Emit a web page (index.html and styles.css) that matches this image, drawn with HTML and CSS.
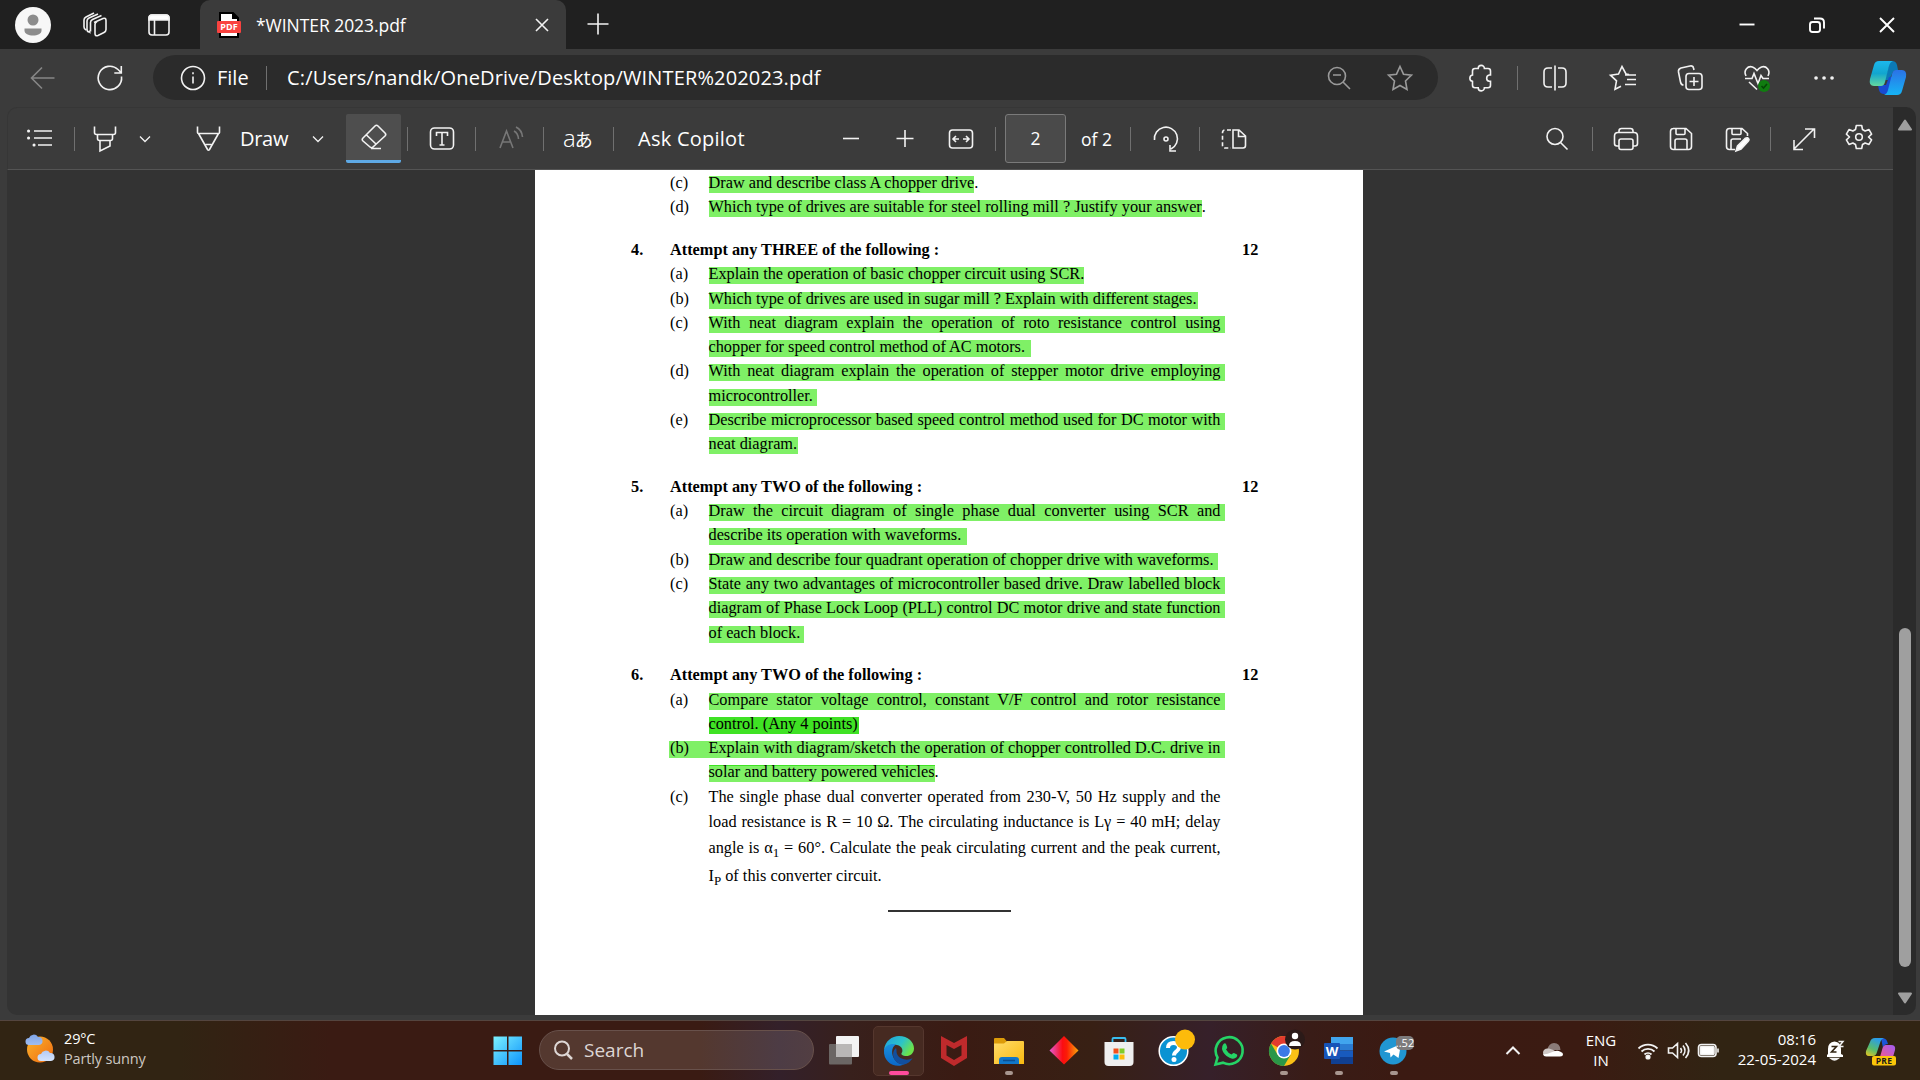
FILE: index.html
```html
<!DOCTYPE html>
<html lang="en">
<head>
<meta charset="utf-8">
<title>WINTER 2023.pdf</title>
<link rel="stylesheet" href="styles.css">
</head>
<body>
<div class="desktop">
  <header class="titlebar">
    <svg class="avatar" viewBox="0 0 36 36"><circle cx="18" cy="18" r="18" fill="#f7f7f7"/><circle cx="18" cy="13" r="5.5" fill="#8c8c8c"/><path d="M9.500 21.500h17v2c0 3.500-4 5-8.500 5s-8.500-1.500-8.500-5z" fill="#8c8c8c"/></svg>
    <svg class="icon workspaces" viewBox="0 0 28 28"><path d="M13 11.500l9-4q3-1 3 2v9q0 2-2 3l-6 3q-3 1-3-2v-9q0-2 2-3M9.500 20.500v-9q0-2 2-3l9-4M9.500 21.500q-1 .5-1-2M5 19q-2-1-2-3V9q0-2 2-3l8-4M8 21q-2 0-2-3v-8q0-2 2-3l9-4"/></svg>
    <svg class="icon tab-actions" viewBox="0 0 28 28"><rect x="4" y="4" width="20" height="20" rx="3"/><path d="M4 9V7q0-3 3-3h14q3 0 3 3v2z" fill="#fff"/><path d="M9.500 9v15"/></svg>
    <div class="tab">
      <svg class="icon" viewBox="0 0 28 28"><path d="M5 2h13l5 5v19H5z" fill="#fff" stroke="#000" stroke-width="2"/><path d="M17 1l7 7h-7z" fill="#000" stroke="none"/><rect x="2" y="10" width="24" height="12" rx="1" fill="#f9423f" stroke="none"/><text class="pdf-label" x="14" y="19.200">PDF</text></svg>
      <span class="tab-title">*WINTER 2023.pdf</span>
      <svg class="icon tab-close" viewBox="0 0 28 28"><path d="M8 8l12 12M20 8L8 20"/></svg>
    </div>
    <svg class="icon new-tab" viewBox="0 0 28 28"><path d="M14 2.500v21M3.500 13h21"/></svg>
    <div class="window-controls">
      <svg class="icon bold" viewBox="0 0 28 28"><path d="M6.500 13.500h15"/></svg>
      <svg class="icon bold" viewBox="0 0 28 28"><rect x="7" y="11" width="10" height="10" rx="2.500"/><path d="M11 7.500h6q4 0 4 4v6"/></svg>
      <svg class="icon bold" viewBox="0 0 28 28"><path d="M7 7l14 14M21 7L7 21"/></svg>
    </div>
  </header>

  <nav class="addressbar">
    <svg class="icon back" viewBox="0 0 28 28"><path d="M25.500 14H3M13 3.500L2.500 14 13 24.500"/></svg>
    <svg class="icon refresh" viewBox="0 0 28 28"><path d="M25.500 12.500A11.700 11.700 0 1 1 22 5.500l3 3M25.300 2v7h-7"/></svg>
    <div class="omnibox">
      <svg class="icon" viewBox="0 0 28 28"><circle cx="14" cy="14" r="11.500"/><path d="M14 12.500v7M14 8.200v2"/></svg>
      <span class="scheme">File</span>
      <i class="divider"></i>
      <span class="url">C:/Users/nandk/OneDrive/Desktop/WINTER%202023.pdf</span>
      <svg class="icon dim zoom-state" viewBox="0 0 28 28"><circle cx="12" cy="12" r="8.500"/><path d="M18 18l7 7M8 11h8"/></svg>
      <svg class="icon dim star" viewBox="0 0 28 28"><path d="M14 2.500l3.500 7.700 8 1-6 5.800 1.500 8.500-7-4-7 4L8.500 17l-6-5.800 8-1z"/></svg>
    </div>
    <svg class="icon extensions" viewBox="0 0 28 28"><path d="M8 4.500h3.200a3.100 3.100 0 0 1 6.200 0H21q2.500 0 2.500 2.500v4h-1.200a3.200 3.200 0 0 0 0 6.300h1.200v4q0 2.500-2.500 2.500h-3.600a3.100 3.100 0 0 1-6.200 0H8q-2.500 0-2.500-2.500v-4a3.200 3.200 0 0 1 0-6.300V7q0-2.500 2.500-2.500z"/></svg>
    <i class="divider"></i>
    <svg class="icon split" viewBox="0 0 28 28"><path d="M14 1.500v25M11 4H7Q3 4 3 8v11q0 4 4 4h4M17 4h4q4 0 4 4v11q0 4-4 4h-4"/></svg>
    <svg class="icon favorites" viewBox="0 0 28 28"><path d="M20 10.500l-3-.5-4-7.500-3.500 7.500-8 1.200 6 5.600-1.500 8.400 6-3M16 11h11M18 15.500h9M16 20.500h11"/></svg>
    <svg class="icon collections" viewBox="0 0 28 28"><rect x="10" y="9.500" width="16" height="16" rx="3"/><path d="M18 13v9M13.500 17.500h9M7.500 21Q5 21 4.500 18L2.500 8Q2 5 5 4l9-2q3-.5 3.500 2l.5 2"/></svg>
    <svg class="icon heart" viewBox="0 0 28 28"><path d="M3 12C0 6 5 1.500 9.500 3Q12 4 14 6.500 16 4 18.500 3C23 1.500 28 6 25 12M2 14.500h7l2-5 4 10 3-8 2 3h6M6 18l8 7.500"/><circle cx="21" cy="22" r="6" fill="#107c10" stroke="none"/><path d="M18.500 22l2 2 3.500-4" stroke="#064706"/></svg>
    <svg class="icon more" viewBox="0 0 28 28"><path d="M6 14h.1M14 14h.1M22 14h.1" stroke-width="3.600" stroke-linecap="round"/></svg>
    <svg class="copilot" viewBox="0 0 40 36">
      <defs>
        <linearGradient id="cpA" x1="0" y1="0" x2="0" y2="1"><stop offset="0" stop-color="#1cb8ed"/><stop offset=".5" stop-color="#12a6cf"/><stop offset="1" stop-color="#63d8a0"/></linearGradient>
        <linearGradient id="cpB" x1="0" y1="0" x2="0" y2="1"><stop offset="0" stop-color="#2b72e6"/><stop offset="1" stop-color="#16b4f5"/></linearGradient>
      </defs>
      <path d="M22 1h2q4 0 5 4l1 5q-5 0-6 4l-3 6h-4z" fill="#0b79b5"/>
      <path d="M10 25h8l3-8h4l-5 17h-4q-4 0-5-4z" fill="#184bd2"/>
      <path d="M11 1h14q-3 1-4 5l-4 16q-1 4-4 4H6Q.5 26 2 19L6 5q1-4 5-4z" fill="url(#cpA)"/>
      <path d="M28 10h6q5 0 4 7l-4 14q-1 4-5 4H16q3-1 4-5l4-16q1-4 4-4z" fill="url(#cpB)"/>
    </svg>
  </nav>

  <div class="viewer">
    <main class="viewer-main">
      <div class="pdf-toolbar">
        <svg class="icon contents" viewBox="0 0 28 28"><path d="M8 6h18M8 13h18M12 20h14"/><path d="M2.500 6h.1M2.500 13h.1M8 20h.1" stroke-width="3" stroke-linecap="round"/></svg>
        <i class="divider d1"></i>
        <svg class="icon highlighter" viewBox="0 0 28 28"><path d="M3.500 1.500v6q0 2 2 2h17q2 0 2-2v-6M6.500 9.500v4q0 2 2 2h11q2 0 2-2v-4M9 15.500V26l10-5v-5.500"/></svg>
        <svg class="icon thin chev1" viewBox="0 0 28 28"><path d="M9 11.500l5 5 5-5"/></svg>
        <svg class="icon pen" viewBox="0 0 28 28"><path d="M2.500 1.500v6q0 1 1 1h20q1 0 1-1v-6M3.500 8.500l9 16q1 1.500 2 0l9-16M10.500 19.500h6"/></svg>
        <span class="label draw">Draw</span>
        <svg class="icon thin chev2" viewBox="0 0 28 28"><path d="M9 11.500l5 5 5-5"/></svg>
        <span class="eraser"><svg class="icon" viewBox="0 0 28 28"><path d="M3 14L15 2q1.500-1.500 3 0l7 7q1.500 1.500 0 3L13 23q-1.500 1.500-3 0l-7-6q-1.500-1.500 0-3zM6.500 11l10 9.500M11 24.500h10"/></svg></span>
        <i class="divider d2"></i>
        <svg class="icon textbox" viewBox="0 0 28 28"><rect x="2.500" y="3" width="23" height="21" rx="4"/><path d="M8.500 11V7.500h11V11M14 7.500V20M11.500 20h5"/></svg>
        <i class="divider d3"></i>
        <svg class="icon faint aloud" viewBox="0 0 28 28"><path d="M3 23L9.500 6 16 23M5.500 17h8.500M17 6q4 2 4.500 8M19 2q6 3 6.500 10"/></svg>
        <i class="divider d4"></i>
        <span class="translate">a<b>あ</b></span>
        <i class="divider d5"></i>
        <span class="label ask">Ask Copilot</span>
        <svg class="icon zoom-out" viewBox="0 0 28 28"><path d="M6 13.500h16"/></svg>
        <svg class="icon zoom-in" viewBox="0 0 28 28"><path d="M5.500 13.500h17M14 5v17"/></svg>
        <svg class="icon fit" viewBox="0 0 28 28"><rect x="2.500" y="5" width="23" height="18" rx="3"/><path d="M12 14H6.500M9 11l-3 3 3 3M16 14h5.500M19 11l3 3-3 3"/></svg>
        <i class="divider d6"></i>
        <span class="page-box">2</span>
        <span class="page-count">of 2</span>
        <i class="divider d7"></i>
        <svg class="icon rotate" viewBox="0 0 28 28"><circle cx="14" cy="14" r="2"/><path d="M2.500 15A11.500 11.500 0 1 1 19 24M24 26h-6v-6"/></svg>
        <i class="divider d8"></i>
        <svg class="icon pages" viewBox="0 0 28 28"><path d="M13 5h6l6.500 6v9.500q0 2.500-2.500 2.500H13zM18.500 5v6.500H25"/><path d="M11 5H5Q2.500 5 2.500 8v12Q2.500 23 5 23h6" stroke-dasharray="4 2.500"/></svg>
        <svg class="icon find" viewBox="0 0 28 28"><circle cx="12" cy="11.500" r="8"/><path d="M17.500 17.500l7 7"/></svg>
        <i class="divider d9"></i>
        <svg class="icon print" viewBox="0 0 28 28"><path d="M7 21H5q-2.500 0-2.500-2.500V11Q2.500 7.500 6 7.500h16q3.500 0 3.500 3.500v7.500Q25.500 21 23 21h-2M7 7.500V6q0-2.500 2.500-2.500h9Q21 3.500 21 6v1.500"/><rect x="7" y="14" width="14" height="10.500" rx="2"/></svg>
        <svg class="icon save" viewBox="0 0 28 28"><path d="M6 3.500h13l5.500 5v13q0 3-3 3H6.500q-3 0-3-3v-15q0-3 3-3zM9 3.500v5q0 1 1 1h7q1 0 1-1v-5M8 24.500V16q0-2 2-2h8q2 0 2 2v8.500"/></svg>
        <svg class="icon save-as" viewBox="0 0 28 28"><path d="M12 24.500H6.500q-3 0-3-3v-15q0-3 3-3H19l5.500 5V11M9 3.500v5q0 1 1 1h7q1 0 1-1v-5M8 24.500V16q0-2 2-2h8"/><path d="M13 26l1.500-5L22 13.500q3-2 4 1-.2 1-1 2L18 24z" fill="#fff"/></svg>
        <i class="divider d10"></i>
        <svg class="icon expand" viewBox="0 0 28 28"><path d="M4 24L24 4M15 4h9.500v9M4 15v9.500h9"/></svg>
        <svg class="icon gear" viewBox="0 0 28 28"><circle cx="14" cy="14" r="3.300"/><path d="M11.300 2.500h5.400l.8 4 2.600 1.500 3.900-1.400 2.600 4.600-3.100 2.800 3.100 2.800-2.600 4.600-3.900-1.400-2.600 1.500-.8 4h-5.400l-.8-4-2.600-1.500L4 21.400l-2.600-4.600L4.500 14l-3.100-2.800L4 6.600 7.900 8l2.600-1.500z" stroke-linejoin="round"/></svg>
      </div>

      <div class="canvas">
        <article class="paper">
          <section class="question first">
            <div class="row"><span class="letter">(c)</span><span class="line"><mark>Draw and describe class A chopper drive</mark>.</span></div>
            <div class="row"><span class="letter">(d)</span><span class="line"><mark>Which type of drives are suitable for steel rolling mill ? Justify your answer</mark>.</span></div>
          </section>
          <section class="question">
            <div class="row heading"><span class="number">4.</span><span class="title">Attempt any THREE of the following :</span><span class="marks">12</span></div>
            <div class="row"><span class="letter">(a)</span><span class="line"><mark>Explain the operation of basic chopper circuit using SCR.</mark></span></div>
            <div class="row"><span class="letter">(b)</span><span class="line"><mark class="end-1">Which type of drives are used in sugar mill ? Explain with different stages.</mark></span></div>
            <div class="row"><span class="letter">(c)</span><span class="line full"><mark>With neat diagram explain the operation of roto resistance control using</mark></span></div>
            <div class="row"><span class="line"><mark class="end-6">chopper for speed control method of AC motors.</mark></span></div>
            <div class="row"><span class="letter">(d)</span><span class="line full"><mark>With neat diagram explain the operation of stepper motor drive employing</mark></span></div>
            <div class="row"><span class="line"><mark class="end-4">microcontroller.</mark></span></div>
            <div class="row"><span class="letter">(e)</span><span class="line full"><mark>Describe microprocessor based speed control method used for DC motor with</mark></span></div>
            <div class="row"><span class="line"><mark class="end-1">neat diagram.</mark></span></div>
          </section>
          <section class="question">
            <div class="row heading"><span class="number">5.</span><span class="title">Attempt any TWO of the following :</span><span class="marks">12</span></div>
            <div class="row"><span class="letter">(a)</span><span class="line full"><mark>Draw the circuit diagram of single phase dual converter using SCR and</mark></span></div>
            <div class="row"><span class="line"><mark class="end-6">describe its operation with waveforms.</mark></span></div>
            <div class="row"><span class="letter">(b)</span><span class="line"><mark class="end-4">Draw and describe four quadrant operation of chopper drive with waveforms.</mark></span></div>
            <div class="row"><span class="letter">(c)</span><span class="line full"><mark>State any two advantages of microcontroller based drive. Draw labelled block</mark></span></div>
            <div class="row"><span class="line full"><mark>diagram of Phase Lock Loop (PLL) control DC motor drive and state function</mark></span></div>
            <div class="row"><span class="line"><mark class="end-4">of each block.</mark></span></div>
          </section>
          <section class="question">
            <div class="row heading"><span class="number">6.</span><span class="title">Attempt any TWO of the following :</span><span class="marks">12</span></div>
            <div class="row"><span class="letter">(a)</span><span class="line full"><mark>Compare stator voltage control, constant V/F control and rotor resistance</mark></span></div>
            <div class="row"><span class="line"><mark class="double end-1">control. (Any 4 points)</mark></span></div>
            <div class="row"><span class="letter marked">(b)</span><span class="line full"><mark>Explain with diagram/sketch the operation of chopper controlled D.C. drive in</mark></span></div>
            <div class="row"><span class="line overlap"><mark>solar and battery powered vehicles</mark>.</span></div>
            <div class="row tall-1"><span class="letter">(c)</span><span class="line full"><span>The single phase dual converter operated from 230-V, 50 Hz supply and the</span></span></div>
            <div class="row tall-2"><span class="line full"><span>load resistance is R = 10 Ω. The circulating inductance is Lγ = 40 mH; delay</span></span></div>
            <div class="row tall-3"><span class="line full"><span>angle is α<sub>1</sub> = 60°. Calculate the peak circulating current and the peak current,</span></span></div>
            <div class="row"><span class="line">I<sub>P</sub> of this converter circuit.</span></div>
          </section>
          <div class="end-rule"></div>
        </article>
      </div>
    </main>
    <div class="scrollbar">
      <svg viewBox="0 0 16 12"><path d="M8 1.500L14 10.500H2z" fill="#9f9f9f" stroke="#9f9f9f" stroke-width="2" stroke-linejoin="round"/></svg>
      <div class="thumb"></div>
      <svg viewBox="0 0 16 12"><path d="M8 10.500L14 1.500H2z" fill="#9f9f9f" stroke="#9f9f9f" stroke-width="2" stroke-linejoin="round"/></svg>
    </div>
  </div>

  <footer class="taskbar">
    <svg class="weather-icon" viewBox="0 0 32 32">
      <defs>
        <linearGradient id="sun" x1="0" y1="0" x2="1" y2="1"><stop offset="0" stop-color="#fbb52c"/><stop offset="1" stop-color="#f0690f"/></linearGradient>
        <linearGradient id="cl" x1="0" y1="0" x2="0" y2="1"><stop offset="0" stop-color="#7fa5e8"/><stop offset="1" stop-color="#d5e3fb"/></linearGradient>
      </defs>
      <circle cx="16" cy="17.500" r="13" fill="url(#sun)"/>
      <path d="M5 13a3.500 3.500 0 0 1 0-7 5 5 0 0 1 9-1 4 4 0 0 1 1 8zM17 29a3.500 3.500 0 0 1 0-7 5 5 0 0 1 9-1 4 4 0 0 1 1 8z" fill="url(#cl)"/>
    </svg>
    <div class="weather"><span>29°C</span><span class="soft">Partly sunny</span></div>
    <svg class="start" viewBox="0 0 30 30"><defs><linearGradient id="win" gradientUnits="userSpaceOnUse" x1="0" y1="0" x2="29" y2="29"><stop offset="0" stop-color="#7ef3ff"/><stop offset="1" stop-color="#0d93fb"/></linearGradient></defs><path d="M.5.500h13.500v13.500H.5zM15.500.500H29v13.500H15.500zM.5 15.500h13.500V29H.5zM15.500 15.500H29V29H15.500z" fill="url(#win)"/></svg>
    <div class="search">
      <svg class="icon" viewBox="0 0 28 28"><circle cx="13" cy="12.500" r="7" stroke="#ddd6d4" stroke-width="2"/><path d="M18 18l5 5" stroke="#ddd6d4" stroke-width="2.500"/></svg>
      <span>Search</span>
    </div>
    <div class="apps">
      <span class="app"><svg viewBox="0 0 30 30"><rect x="0" y="8" width="23" height="20.500" rx="1" fill="#6b6664"/><rect x="7" y="0" width="23" height="21" rx="1" fill="#f3f3f3"/><rect x="7" y="8" width="16" height="13" fill="#b9b7b6"/></svg></span>
      <span class="app active"><svg viewBox="0 0 30 30">
        <defs><linearGradient id="eg" x1="0" y1="0" x2="1" y2=".5"><stop offset="0" stop-color="#1e9fe0"/><stop offset=".6" stop-color="#2cc3c9"/><stop offset="1" stop-color="#6be34b"/></linearGradient><linearGradient id="eb" x1="0" y1="0" x2="0" y2="1"><stop offset="0" stop-color="#1a8fdd"/><stop offset="1" stop-color="#0b68c8"/></linearGradient></defs>
        <path d="M0 14C1 5 8 0 15 0c9 0 15 6 15 12.500 0 5-4 7.500-7.500 7.500-4 0-5.500-1.500-5-2.700 2-2.300 1-7.300-4.500-8.300-6-1-11 1.500-13 5z" fill="url(#eg)"/>
        <path d="M0 14C2 9 7 7 12 8.500 7 11 7 19 11 24c3 4 7 5 10 4C12 33-1 27 0 14z" fill="url(#eb)"/>
        <path d="M12 12C6 17 10 28 19 28.500c4 0 8-3.500 9.500-6.500-4 3-13 2-15.500-4-1-2.500 0-4.500-1-6z" fill="#124f9e"/></svg></span>
      <span class="app"><svg viewBox="0 0 30 30"><path d="M2 0l13 7 13-7v22l-13 8-13-8zM7.500 9v10.500l7.500 4.500 7.500-4.500V9L15 13z" fill="#bf2a2c" fill-rule="evenodd"/></svg></span>
      <span class="app running"><svg viewBox="0 0 30 30"><defs><linearGradient id="fo" x1="0" y1="0" x2="1" y2="1"><stop offset="0" stop-color="#ffdc6b"/><stop offset="1" stop-color="#f9b90f"/></linearGradient></defs><path d="M0 3q0-1 1-1h9l3 3.500V9H0z" fill="#dc9b09"/><path d="M0 7.500h10L13 5h16q1 0 1 1v22H0z" fill="url(#fo)"/><path d="M5 28v-4q0-3 3-3h14q3 0 3 3v4z" fill="#1177c9"/><path d="M9 24.500h12" stroke="#0b4f92" stroke-width="1.500"/></svg></span>
      <span class="app"><svg viewBox="0 0 30 30"><defs><linearGradient id="di"><stop offset="0" stop-color="#e35bd5"/><stop offset=".45" stop-color="#fb0d12"/><stop offset=".6" stop-color="#fb1d05"/><stop offset="1" stop-color="#f7a80c"/></linearGradient></defs><path d="M15 0L29.500 14.500 15 28.500 .5 14.500z" fill="url(#di)"/></svg></span>
      <span class="app"><svg viewBox="0 0 30 30"><path d="M8.500 7V3q0-1 1-1h11q1 0 1 1v4" fill="none" stroke="#38bdf0" stroke-width="1.800"/><path d="M.5 6h29v20q0 4-4 4h-21q-4 0-4-4z" fill="#efefef"/><path d="M9.500 12.500h5v5h-5z" fill="#f1511b"/><path d="M15.500 12.500h5v5h-5z" fill="#80cc28"/><path d="M9.500 18.500h5v5h-5z" fill="#00adef"/><path d="M15.500 18.500h5v5h-5z" fill="#fbbc09"/></svg></span>
      <span class="app"><svg class="wide" viewBox="0 0 40 40"><circle cx="19.500" cy="20" r="14.300" fill="#0a93d3" stroke="#fff" stroke-width="1.500"/><path d="M14 17q0-5 5.500-5t5.500 4.500c0 4-5 3.500-5 8" fill="none" stroke="#fff" stroke-width="4"/><circle cx="20" cy="28.500" r="2.500" fill="#fff"/><circle cx="31" cy="8.500" r="10" fill="#fdbb0b"/></svg></span>
      <span class="app"><svg viewBox="0 0 30 30"><path d="M1.500 28.500l2-7A13.500 13.500 0 1 1 9 26.700z" fill="none" stroke="#25d366" stroke-width="2.600"/><path d="M9.500 8q1.500-1.500 2.500 0l1.200 3q.3 1-1.200 2.500 2 3.500 5.500 5 1.500-1.800 2.500-1.500l3 1.500q.8 1-.5 2.800-2 2-5 1.200C12 20.500 9 17 8 13q-.3-3 1.500-5z" fill="#25d366"/></svg></span>
      <span class="app running"><svg class="wide" viewBox="0 0 40 40"><circle cx="20" cy="20" r="15" fill="#fbc116"/><path d="M20 20L7 12.500a15 15 0 0 1 26 0z" fill="#e33b2e"/><path d="M7 12.500A15 15 0 0 0 20 35l6.500-11-13-.5z" fill="#2a9748"/><circle cx="20" cy="20" r="7.500" fill="#fff"/><circle cx="20" cy="20" r="5.900" fill="#3b79e6"/><circle cx="31" cy="8.500" r="10" fill="#2b1a18"/><circle cx="31" cy="5" r="3.200" fill="#fff"/><path d="M25 15q0-5 6-5t6 5z" fill="#fff"/></svg></span>
      <span class="app running"><svg viewBox="0 0 30 30"><path d="M7 1h22v7H7z" fill="#41a5ee"/><path d="M7 8h22v6.500H7z" fill="#2b7cd3"/><path d="M7 14.500h22V21H7z" fill="#185abd"/><path d="M7 21h22v7H7z" fill="#103f91"/><rect x="0" y="7" width="16" height="16" rx="1" fill="#1754b8"/><text class="word-w" x="8" y="19.500">W</text></svg></span>
      <span class="app running"><svg class="wide" viewBox="0 0 40 40"><circle cx="19" cy="20" r="13.500" fill="#2196d2"/><path d="M10 20.500L27 13l-2.500 14-5-3.500-3 3-.5-4.500z" fill="#fff"/><rect x="22" y="5" width="18" height="14" rx="5" fill="#7d7b7c"/><text class="tg-count" x="31" y="16">..52</text></svg></span>
    </div>
    <svg class="icon tray-up" viewBox="0 0 28 28"><path d="M7.500 17L14 10.500l6.500 6.500" stroke-width="2"/></svg>
    <svg class="icon cloud" viewBox="0 0 28 28"><path d="M8 13q2-7 7-7 6 0 6.500 7z" fill="#8a7b78" stroke="none"/><path d="M4 16q0-5 6-4.500 8 2 10 7H7q-3 0-3-2.500z" fill="#cfc8c6" stroke="none"/><path d="M4 17q3 1 8-1.500 6-3 9-1 3 1 3 2.500 0 2.500-3 2.500H7q-2.500 0-3-2.500z" fill="#fff" stroke="none"/></svg>
    <div class="lang"><span>ENG</span><span>IN</span></div>
    <svg class="icon wifi" viewBox="0 0 28 28"><path d="M4.500 11.500a13.500 13.500 0 0 1 19 0M7.500 14.500a9.200 9.200 0 0 1 13 0M10.500 17.500a5 5 0 0 1 7 0" stroke-width="1.800"/><circle cx="14" cy="20" r="1.800" fill="#fff"/></svg>
    <svg class="icon speaker" viewBox="0 0 28 28"><path d="M4.500 11h4l5-4.500v14l-5-4.500h-4zM16.500 11q2 2.500 0 5M19 8.500q4 5 0 10M21.500 6q6.500 7.500 0 15"/></svg>
    <svg class="icon battery" viewBox="0 0 28 28"><rect x="4.500" y="7.500" width="17.500" height="12" rx="3"/><rect x="6.500" y="9.500" width="13.500" height="8" rx="1" fill="#fff"/><path d="M24 11.500v4"/></svg>
    <div class="clock"><span>08:16</span><span>22-05-2024</span></div>
    <svg class="icon bell" viewBox="0 0 28 28"><path d="M6 18l1-1v-5q0-7 6.500-7.500Q20 5 20 12v5l2 1v2H6z" fill="#fff" stroke="none"/><path d="M10 21.500h7q-3.500 3-7 0z" fill="#fff"/><path d="M10.500 9.500h5l-5 5.500h5" stroke="#312413" stroke-width="1.600"/><path d="M17.500 4.500h4.500l-4 5h4.500" stroke-width="1.500"/></svg>
    <svg class="copilot-pre" viewBox="0 0 30 30">
      <defs>
        <linearGradient id="pA" x1=".5" y1="0" x2="0" y2="1"><stop offset="0" stop-color="#2b9de8"/><stop offset=".55" stop-color="#58bd6c"/><stop offset="1" stop-color="#f1c51a"/></linearGradient>
        <linearGradient id="pB" x1="1" y1="0" x2="0" y2="1"><stop offset="0" stop-color="#a05cf5"/><stop offset="1" stop-color="#ef5a8e"/></linearGradient>
      </defs>
      <path d="M15 2q5 0 6 3l1 3q-4 0-5 4z" fill="#1c54d8"/>
      <path d="M9 2h9q-3 1-4 5l-3 9q-1 4-4 4H3q-4 0-3-5L4 6q1-4 5-4z" fill="url(#pA)"/>
      <path d="M20 9h5q5 0 4 5l-2 7H14l2-7q1-5 4-5z" fill="url(#pB)"/>
      <rect x="6" y="20" width="24" height="9.500" rx="2" fill="#fbc609"/><text class="pre-label" x="18" y="27.800">PRE</text>
    </svg>
  </footer>
</div>
</body>
</html>
```
FILE: styles.css
```css
* { box-sizing: border-box; }
html, body { margin: 0; }
body {
  width: 1920px;
  height: 1080px;
  overflow: hidden;
  background: #3b3b3b;
  color: #fff;
  font-family: "Open Sans", "Noto Sans", sans-serif;
}
svg { display: block; flex: none; overflow: visible; }
.desktop { display: flex; flex-direction: column; width: 1920px; height: 1080px; }

.icon { width: 28px; height: 28px; fill: none; stroke: #f2f2f2; stroke-width: 1.6; }
.icon.bold { stroke: #fff; stroke-width: 1.9; }
.icon.thin { stroke-width: 1.3; }
.icon.dim { stroke: #9a9a9a; }
.icon.faint { stroke: #777; }
.divider { flex: none; width: 1px; height: 24px; background: #707070; }

/* Title bar */
.titlebar { display: flex; align-items: center; height: 49px; padding: 0 19px 0 15px; background: #202020; }
.avatar { width: 36px; height: 36px; }
.workspaces { margin-left: 30px; }
.tab-actions { margin-left: 36px; }
.tab {
  display: flex;
  align-items: center;
  width: 366px;
  height: 49px;
  margin-left: 27px;
  padding: 0 10px 0 15px;
  border-radius: 10px 10px 0 0;
  background: #3b3b3b;
}
.tab-title { margin-left: 13px; font-size: 17.5px; letter-spacing: -0.05px; white-space: nowrap; }
.tab-close { margin-left: auto; }
.new-tab { margin-left: 18px; }
.window-controls { display: flex; gap: 42px; margin-left: auto; }
.pdf-label { font: 700 9px "Open Sans", sans-serif; fill: #fff; stroke: none; text-anchor: middle; }

/* Address bar */
.addressbar { display: flex; align-items: center; height: 58px; padding: 0 12px 1px 29px; background: #3b3b3b; }
.back { stroke: #868686; }
.refresh { margin-left: 39px; }
.omnibox {
  display: flex;
  align-items: center;
  width: 1285px;
  height: 45px;
  margin-left: 29px;
  padding: 0 24px 0 26px;
  border-radius: 23px;
  background: #2b2b2b;
  font-size: 20px;
  white-space: nowrap;
}
.scheme { width: 49px; margin-left: 10px; }
.url { margin-left: 20px; letter-spacing: 0.15px; }
.zoom-state { margin-left: auto; }
.star { margin-left: 33px; }
.extensions { margin-left: 29px; }
.addressbar > .divider { margin-left: 22px; }
.split { margin-left: 23px; }
.favorites { margin-left: 40px; }
.collections, .heart, .more { margin-left: 39px; }
.copilot { width: 40px; height: 36px; margin-left: auto; }

/* PDF viewer */
.viewer { display: flex; height: 913px; padding: 0 4px 5px 7px; background: #3b3b3b; }
.viewer-main { display: flex; flex-direction: column; width: 1886px; }
.pdf-toolbar {
  display: flex;
  flex: none;
  align-items: center;
  height: 63px;
  padding-left: 18px;
  border-top: 1px solid #363636;
  border-bottom: 1px solid #545454;
  border-left: 1px solid #363636;
  border-radius: 10px 0 0 0;
  white-space: nowrap;
}
.label { margin-top: -1px; font-size: 20px; letter-spacing: -0.3px; }
.d1 { margin-left: 20px; }
.highlighter { margin-left: 16px; }
.chev1 { margin-left: 12px; }
.pen { margin-left: 36px; }
.draw { width: 49px; margin-left: 17px; }
.chev2 { margin-left: 15px; }
.eraser {
  display: flex;
  align-items: center;
  justify-content: center;
  width: 55px;
  height: 49px;
  margin: -1px 0 0 14px;
  padding-top: 3px;
  border-bottom: 3px solid #5ea9e5;
  border-radius: 2px;
  background: #4e4e4e;
}
.d2 { margin-left: 6px; }
.textbox { margin-left: 20px; }
.d3 { margin-left: 19px; }
.aloud { margin-left: 21px; }
.d4 { margin-left: 18px; }
.translate { display: flex; align-items: center; width: 29px; height: 28px; margin: -3px 0 0 19px; font-size: 24px; font-weight: 300; }
.translate b { margin: 3px 0 0 -1px; font: 400 18px "Noto Sans CJK JP", sans-serif; }
.d5 { margin-left: 21px; }
.ask { width: 109px; margin-left: 24px; letter-spacing: 0.25px; }
.zoom-out { margin-left: 90px; }
.zoom-in { margin-left: 26px; }
.fit { margin-left: 28px; }
.d6 { margin-left: 20px; }
.page-box {
  width: 61px;
  height: 49px;
  margin: -1px 0 0 9px;
  border: 1px solid #7a7a7a;
  border-radius: 3px;
  background: #4a4a4a;
  font-size: 17.5px;
  line-height: 47px;
  text-align: center;
}
.page-count { width: 32px; margin-left: 15px; font-size: 17.5px; }
.d7 { margin-left: 17px; }
.rotate { margin-left: 21px; }
.d8 { margin-left: 19px; }
.pages { margin-left: 20px; }
.find { margin-left: 295px; }
.d9 { margin-left: 21px; }
.print { margin-left: 19px; }
.save { margin-left: 27px; }
.save-as { margin-left: 28px; }
.d10 { margin-left: 19px; }
.expand { margin-left: 19px; }
.gear { margin: -4px 0 0 27px; }

.canvas { display: flex; height: 845px; padding-left: 528px; overflow: hidden; border-radius: 0 0 0 10px; background: #333; }
.paper {
  width: 828px;
  height: 845px;
  padding-top: 6px;
  background: #fff;
  color: #000;
  font: 16.300px/14px "Liberation Serif", serif;
  white-space: nowrap;
}
.question { padding: 0 104px 0 96px; margin-top: 18.4px; }
.question.first { margin-top: 0; }
.row { display: grid; grid-template-columns: 39px 38.500px 533.500px auto; align-items: start; height: 24.290px; }
.heading { font-weight: 700; }
.number { grid-column: 1; }
.title { grid-column: 2 / 4; }
.marks { grid-column: 4; }
.letter { grid-column: 2; height: 17px; }
.letter.marked { margin-left: -1px; padding-left: 1px; background: #7ff066; }
.line { grid-column: 3; display: flex; height: 17px; white-space: pre; }
mark { display: block; height: 17px; background: #7ff066; color: #000; }
.full > * { width: 516px; height: 17px; padding-right: 4px; white-space: nowrap; text-align: justify; text-align-last: justify; }
.end-1 { padding-right: 1px; }
.end-4 { padding-right: 4px; }
.end-6 { padding-right: 6px; }
.double { background: #3fe224; }
.overlap mark { border-top: 1px solid #3fe224; line-height: 12px; }
sub { font-size: 13px; line-height: 0; vertical-align: -4px; }
.row .line:not(.full):has(> sub) { display: block; }
.tall-1 { height: 25.800px; }
.tall-2 { height: 26px; }
.tall-3 { height: 27.500px; }
.end-rule { width: 123px; height: 1.500px; margin: 17px 0 0 353px; background: #333; }

.scrollbar {
  display: flex;
  flex-direction: column;
  align-items: center;
  width: 23px;
  height: 908px;
  padding: 12px 0 11px;
  border-radius: 0 10px 10px 0;
  background: #2b2b2b;
}
.scrollbar svg { width: 16px; height: 12px; }
.thumb { width: 12px; height: 339px; margin: 497px 0 auto; border-radius: 6px; background: #9f9f9f; }

/* Taskbar */
.taskbar {
  display: flex;
  align-items: center;
  height: 60px;
  padding-left: 24px;
  border-top: 1px solid #54453f;
  background: linear-gradient(90deg, #312413 0, #312413 180px, #3a1b13 330px, #3a1b13 700px, #33202a 780px, #38201c 850px, #3a1b13 960px, #382014 1090px, #36202a 1210px, #391c17 1310px, #3b1a12 1400px, #3b1b12 1580px, #312413 1720px, #312413 100%);
}
.weather-icon { width: 32px; height: 32px; margin-top: -6px; }
.weather { display: flex; flex-direction: column; width: 83px; margin: -3px 0 0 8px; font-size: 14.5px; line-height: 20px; letter-spacing: -0.15px; white-space: nowrap; }
.soft { color: #cdc8c2; }
.start { width: 30px; height: 30px; margin-left: 346px; }
.search {
  display: flex;
  align-items: center;
  width: 275px;
  height: 40px;
  margin: -1px 0 0 16px;
  padding-left: 10px;
  border: 1px solid #68514b;
  border-radius: 20px;
  background: linear-gradient(90deg, #54382f 0, #54382f 160px, #4d3c45 240px, #523e42 100%);
  color: #ddd6d4;
  font-size: 19px;
  letter-spacing: 0;
}
.search .icon { margin-left: -1px; }
.search span { margin-left: 7px; }
.apps { display: flex; margin-left: 2px; }
.app { position: relative; display: flex; align-items: center; justify-content: center; width: 55px; height: 50px; }
.app svg { width: 30px; height: 30px; }
.app svg.wide { width: 40px; height: 40px; }
.active { width: 51px; margin: 0 2px; border: 1px solid #55372e; border-radius: 5px; background: #462a21; }
.running::after, .active::after {
  content: "";
  position: absolute;
  bottom: 1px;
  left: 50%;
  width: 8px;
  height: 4px;
  margin-left: -4px;
  border-radius: 2px;
  background: #a8968f;
}
.active::after { bottom: 0; width: 20px; margin-left: -10px; background: #ff4b9d; }
.word-w { font: 700 13px "Open Sans", sans-serif; fill: #fff; text-anchor: middle; }
.tg-count { font: 11px "Open Sans", sans-serif; fill: #fff; text-anchor: middle; }
.tray-up { margin-left: 78px; }
.cloud { margin-left: 12px; }
.lang { display: flex; flex-direction: column; align-items: center; width: 36px; margin: -2px 0 0 16px; font-size: 15px; line-height: 20px; }
.wifi { margin-left: 15px; }
.speaker, .battery { margin-left: 2px; }
.clock { display: flex; flex-direction: column; align-items: flex-end; width: 82px; margin: -4px 0 0 12px; font-size: 15px; line-height: 20px; letter-spacing: 0; white-space: nowrap; }
.bell { margin-left: 5px; }
.copilot-pre { width: 30px; height: 30px; margin-left: 17px; }
.pre-label { font: 700 8.500px "Open Sans", sans-serif; fill: #1a1a1a; text-anchor: middle; letter-spacing: .3px; }
```
